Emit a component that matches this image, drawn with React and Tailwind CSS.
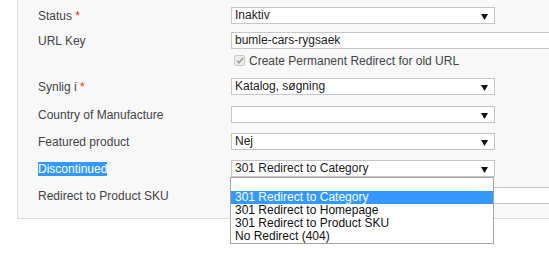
import React from "react";

const Arrow = () => (
  <svg width="7" height="6" viewBox="0 0 7 6" className="absolute right-[6px] top-[6px]">
    <polygon points="0,0 7,0 3.5,6" fill="#111" />
  </svg>
);

const Select = ({ value }) => (
  <div className="relative w-[264px] h-[17px] bg-white border border-[#c6c6c6] pl-[3px] text-[12px] leading-[15px] text-[#222]">
    {value}
    <Arrow />
  </div>
);

const Label = ({ children, required, selected }) => (
  <div className="w-[193px] shrink-0 text-[12px] text-[#444]">
    {selected ? (
      <span className="bg-[#3399ff] text-white">{children}</span>
    ) : (
      children
    )}
    {required && <span className="text-[#eb340a]"> *</span>}
  </div>
);

const Row = ({ className = "", children }) => (
  <div className={`flex items-center h-[17px] ${className}`}>{children}</div>
);

const options = [
  "",
  "301 Redirect to Category",
  "301 Redirect to Homepage",
  "301 Redirect to Product SKU",
  "No Redirect (404)",
];

export default function App() {
  return (
    <div
      className="relative w-[549px] h-[257px] bg-white overflow-hidden"
      style={{ fontFamily: '"Liberation Sans", Arial, sans-serif' }}
    >
      <div className="ml-[17px] w-[560px] bg-[#f8f8f8] border-l border-b border-[#dcdcdc] pl-[20px] pt-[7px] pb-[14px]">
        <Row>
          <Label required>Status</Label>
          <Select value="Inaktiv" />
        </Row>
        <Row className="mt-[8px]">
          <Label>URL Key</Label>
          <div className="w-[340px] h-[17px] bg-white border border-[#c6c6c6] pl-[3px] text-[12px] leading-[15px] text-[#222]">
            bumle-cars-rygsaek
          </div>
        </Row>
        <div className="flex items-center h-[13px] mt-[5px] pl-[196px] text-[12px] text-[#444]">
          <span className="flex items-center justify-center w-[11px] h-[11px] mr-[4px] rounded-[2px] border border-[#c8c8c8] bg-[#ececec]">
            <svg width="8" height="7" viewBox="0 0 8 7">
              <polyline points="1,3.8 3,5.8 7,1" fill="none" stroke="#9a9a9a" strokeWidth="1.6" />
            </svg>
          </span>
          Create Permanent Redirect for old URL
        </div>
        <Row className="mt-[11px]">
          <Label required>Synlig i</Label>
          <Select value="Katalog, søgning" />
        </Row>
        <Row className="mt-[11px]">
          <Label>Country of Manufacture</Label>
          <Select value="" />
        </Row>
        <Row className="mt-[10px]">
          <Label>Featured product</Label>
          <Select value="Nej" />
        </Row>
        <Row className="mt-[10px]">
          <Label selected>Discontinued</Label>
          <Select value="301 Redirect to Category" />
        </Row>
        <Row className="mt-[10px]">
          <Label>Redirect to Product SKU</Label>
          <div className="w-[340px] h-[17px] bg-white border border-[#c6c6c6]" />
        </Row>
      </div>

      <div className="absolute left-[230px] top-[177px] w-[264px] bg-white border border-[#a5a5a5] text-[12px] leading-[13px] text-[#111]">
        {options.map((o, i) => (
          <div
            key={i}
            className={`h-[13px] pl-[4px] ${i === 1 ? "bg-[#3399ff] text-white" : ""}`}
          >
            {o}
          </div>
        ))}
      </div>
    </div>
  );
}
